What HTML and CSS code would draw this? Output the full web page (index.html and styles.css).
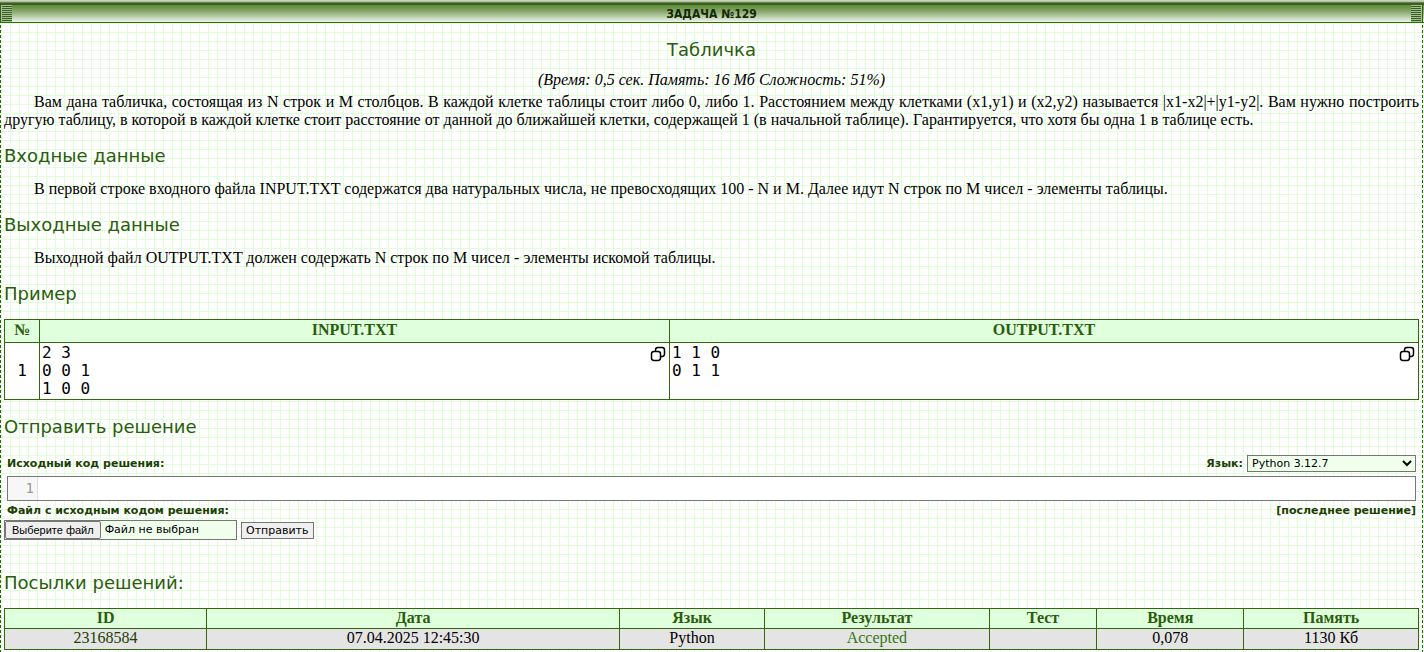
FILE: index.html
```html
<!DOCTYPE html>
<html lang="ru">
<head>
<meta charset="utf-8">
<title>Задача №129</title>
<link rel="stylesheet" href="styles.css">
</head>
<body>
<div class="page">
  <header class="bar"><span class="grip grip-left"></span><span class="bar-title">ЗАДАЧА №129</span><span class="grip grip-right"></span></header>
  <main class="content">
    <h1 class="heading center">Табличка</h1>
    <p class="limits">(Время: 0,5 сек. Память: 16 Мб Сложность: 51%)</p>
    <p class="text">Вам дана табличка, состоящая из N строк и M столбцов. В каждой клетке таблицы стоит либо 0, либо 1. Расстоянием между клетками (x1,y1) и (x2,y2) называется |x1-x2|+|y1-y2|. Вам нужно построить другую таблицу, в которой в каждой клетке стоит расстояние от данной до ближайшей клетки, содержащей 1 (в начальной таблице). Гарантируется, что хотя бы одна 1 в таблице есть.</p>
    <h2 class="heading">Входные данные</h2>
    <p class="text">В первой строке входного файла INPUT.TXT содержатся два натуральных числа, не превосходящих 100 - N и M. Далее идут N строк по M чисел - элементы таблицы.</p>
    <h2 class="heading">Выходные данные</h2>
    <p class="text">Выходной файл OUTPUT.TXT должен содержать N строк по M чисел - элементы искомой таблицы.</p>
    <h2 class="heading wide">Пример</h2>
    <table class="grid samples">
      <colgroup><col class="c-num"><col class="c-in"><col></colgroup>
      <thead><tr><th>№</th><th>INPUT.TXT</th><th>OUTPUT.TXT</th></tr></thead>
      <tbody><tr>
        <td class="num">1</td>
        <td><div class="sample"><pre class="code">2 3
0 0 1
1 0 0</pre><button class="copy" type="button" aria-label="Копировать"><svg width="16" height="16" viewBox="0 0 16 16" fill="none" stroke="#000" stroke-width="1.5"><rect x="1.5" y="5.5" width="9" height="9" rx="2.4"/><path d="M5.5 5.5V3.9a2.4 2.4 0 0 1 2.4-2.4h4.2a2.4 2.4 0 0 1 2.4 2.4v4.2a2.4 2.4 0 0 1-2.4 2.4h-1.6"/></svg></button></div></td>
        <td><div class="sample"><pre class="code">1 1 0
0 1 1</pre><button class="copy" type="button" aria-label="Копировать"><svg width="16" height="16" viewBox="0 0 16 16" fill="none" stroke="#000" stroke-width="1.5"><rect x="1.5" y="5.5" width="9" height="9" rx="2.4"/><path d="M5.5 5.5V3.9a2.4 2.4 0 0 1 2.4-2.4h4.2a2.4 2.4 0 0 1 2.4 2.4v4.2a2.4 2.4 0 0 1-2.4 2.4h-1.6"/></svg></button></div></td>
      </tr></tbody>
    </table>
    <h2 class="heading wide">Отправить решение</h2>
    <form class="form">
      <div class="row">
        <label for="source">Исходный код решения:</label>
        <div class="lang"><label for="lang">Язык:</label>
          <select class="select" id="lang"><option>Python 3.12.7</option></select></div>
      </div>
      <div class="editor"><span class="gutter">1</span><textarea class="source" id="source" rows="1" spellcheck="false"></textarea></div>
      <div class="row">
        <label for="file">Файл с исходным кодом решения:</label>
        <a class="last" href="#">[последнее решение]</a>
      </div>
      <div class="send">
        <label class="file" for="file"><input class="file-input" type="file" id="file"><span class="file-button">Выберите файл</span><span>Файл не выбран</span></label>
        <button class="submit" type="submit">Отправить</button>
      </div>
    </form>
    <h2 class="heading wide">Посылки решений:</h2>
    <table class="grid runs">
      <colgroup><col class="c-id"><col class="c-date"><col class="c-lang"><col class="c-result"><col class="c-test"><col class="c-time"><col></colgroup>
      <thead><tr><th>ID</th><th>Дата</th><th>Язык</th><th>Результат</th><th>Тест</th><th>Время</th><th>Память</th></tr></thead>
      <tbody><tr><td><a class="run" href="#">23168584</a></td><td>07.04.2025 12:45:30</td><td>Python</td><td class="ok">Accepted</td><td></td><td>0,078</td><td>1130 Кб</td></tr></tbody>
    </table>
  </main>
</div>
</body>
</html>
```
FILE: styles.css
```css
* { box-sizing: border-box; }
body {
  margin: 0;
  color: #000;
  font: 16px/18px "Liberation Serif", "Times New Roman", serif;
  background-color: #fff;
  background-image: linear-gradient(#e0ffd8 1px, transparent 1px), linear-gradient(90deg, #e0ffd8 1px, transparent 1px);
  background-size: 9px 9px;
  background-position: 1px 5px;
}
.page { min-height: 100vh; display: flex; flex-direction: column; }
.bar {
  display: flex;
  justify-content: space-between;
  height: 23px;
  padding: 5px 2px 0 1px;
  border-bottom: 1px solid #33660f;
  background: linear-gradient(#d0d8c4 0, #c4ceb8 1px, #9cb08a 2px, #376018 3px, #376018 5px, #5c8a35 5px, #8cac72 12px, #f0f4ec 22px);
}
.bar-title { color: #142a04; font: bold 12px/18px "DejaVu Sans Condensed", "DejaVu Sans", sans-serif; }
.grip {
  width: 11px;
  background: repeating-linear-gradient(#a8bc98 0 1px, #33601a 1px 2px);
}
.grip-left { border-left: 1px solid #a8bc98; box-shadow: -1px 0 #33601a; }
.grip-right { border-right: 1px solid #a8bc98; box-shadow: 1px 0 #33601a; }
.content {
  flex: 1;
  margin-right: 1px;
  padding: 16px 4px 1px;
  background:
    repeating-linear-gradient(transparent 0 2px, #2c6414 2px 5px) left / 1px 100% no-repeat,
    repeating-linear-gradient(transparent 0 2px, #2c6414 2px 5px) right / 1px 100% no-repeat;
}
.heading { margin: 16px 0 13px; color: #2a5c0c; font: 18px/22px "DejaVu Sans", Verdana, sans-serif; }
.center { margin: 0 0 10px; text-align: center; }
.wide { margin-bottom: 14px; }
.limits { margin: 0 0 4px; text-align: center; font-style: italic; }
.text { margin: 0; text-align: justify; text-indent: 30px; }
.grid { width: 100%; border-collapse: collapse; table-layout: fixed; }
.grid th, .grid td { padding: 1px 2px; border: 1px solid #33660f; text-align: center; }
.grid th { color: #2a5c0c; background: #e0ffdc; }
.samples th { height: 23px; padding: 0 2px 2px; }
.samples td { background: #fff; }
.samples .num, .code { font: 16px/18px "DejaVu Sans Mono", monospace; }
.c-num { width: 35px; }
.c-in { width: 44.55%; }
.sample { display: flex; justify-content: space-between; align-items: flex-start; min-height: 54px; }
.code { margin: 0; text-align: left; }
.copy { display: flex; padding: 2px 1px; border: 0; background: none; }
.form { padding-top: 3px; color: #1c4004; font: bold 11px/14px "DejaVu Sans", Verdana, sans-serif; }
.row { display: flex; justify-content: space-between; align-items: center; padding: 0 3px; }
.lang { display: flex; align-items: center; gap: 4px; }
.select {
  width: 169px;
  height: 17px;
  border: 1px solid #767676;
  background: #f0ffec;
  font: 11px "DejaVu Sans", Verdana, sans-serif;
}
.editor { display: flex; height: 25px; margin: 4px 3px 3px; border: 1px solid #767676; background: #fff; }
.gutter {
  width: 30px;
  padding: 3px 3px 0 0;
  border-right: 1px solid #ddd;
  color: #999;
  background: #f7f7f7;
  text-align: right;
  font: 14px/16px "DejaVu Sans Mono", monospace;
}
.source { flex: 1; padding: 3px 4px; border: 0; outline: 0; resize: none; background: none; font: 14px/16px "DejaVu Sans Mono", monospace; }
.last { color: inherit; text-decoration: none; }
.send { display: flex; align-items: center; gap: 4px; margin-top: 2px; }
.file {
  display: flex;
  align-items: center;
  gap: 4px;
  width: 233px;
  height: 20px;
  border: 1px solid #767676;
  color: #000;
  background: #f0ffec;
  font-weight: normal;
}
.file-input { position: absolute; width: 1px; height: 1px; opacity: 0; }
.file-button { height: 18px; padding: 1px 6px; border: 1px solid #767676; border-radius: 2px; background: #efefef; font: 11px/14px "Liberation Sans", Arial, sans-serif; }
.submit { height: 17px; padding: 0 4px; border: 1px solid #767676; background: #efefef; color: #000; font: 11px "DejaVu Sans", Verdana, sans-serif; }
.form + .heading { margin-top: 32px; }
.runs th { padding: 0 2px 1px; }
.runs td { padding: 0 2px 2px; background: #e4e4e4; }
.c-id { width: 14.3%; }
.c-date { width: 29.2%; }
.c-lang { width: 10.25%; }
.c-result { width: 15.9%; }
.c-test { width: 7.6%; }
.c-time { width: 10.4%; }
.run { color: #1c4004; text-decoration: none; }
.runs .ok { color: #33780f; }
```
